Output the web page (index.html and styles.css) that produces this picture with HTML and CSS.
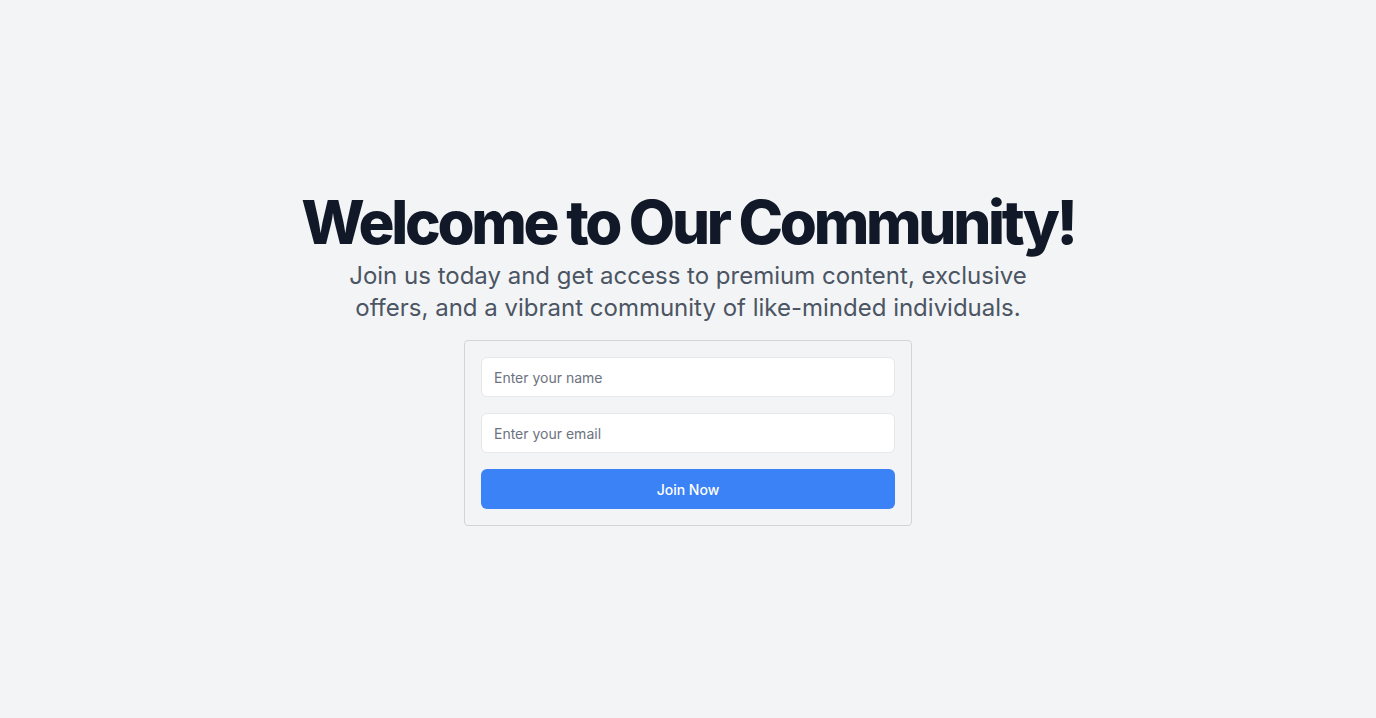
FILE: index.html
```html
<!DOCTYPE html>
<html lang="en">
<head>
<meta charset="utf-8">
<title>Welcome</title>
<link rel="stylesheet" href="styles.css">
</head>
<body>
<main class="page">
  <section class="hero">
    <h1 class="title">Welcome to Our Community!</h1>
    <p class="subtitle">Join us today and get access to premium content, exclusive offers, and a vibrant community of like-minded individuals.</p>
    <form class="card">
      <input class="field" type="text" placeholder="Enter your name">
      <input class="field" type="email" placeholder="Enter your email">
      <button class="btn" type="button">Join Now</button>
    </form>
  </section>
</main>
</body>
</html>
```
FILE: styles.css
```css
* { box-sizing: border-box; }
html, body { margin: 0; padding: 0; }
body {
  background: #f3f4f6;
  font-family: Inter, "Noto Sans", sans-serif;
  color: #111827;
}
.page {
  min-height: 100vh;
  display: flex;
  align-items: center;
  justify-content: center;
}
.hero {
  display: flex;
  flex-direction: column;
  align-items: center;
  text-align: center;
}
.title {
  margin: 0;
  font-size: 60px;
  line-height: 60px;
  font-weight: 800;
  letter-spacing: -0.055em;
  color: #111827;
}
.subtitle {
  margin: 8px 0 0;
  max-width: 690px;
  font-size: 24px;
  line-height: 32px;
  color: #4b5563;
}
.card {
  margin-top: 16px;
  width: 448px;
  padding: 16px;
  border: 1px solid #d1d5db;
  border-radius: 4px;
  display: flex;
  flex-direction: column;
  gap: 16px;
}
.field {
  height: 40px;
  padding: 0 12px;
  border: 1px solid #e5e7eb;
  border-radius: 6px;
  background: #fff;
  font-family: inherit;
  font-size: 14px;
  color: #111827;
  outline: none;
}
.field::placeholder { color: #6b7280; }
.btn {
  height: 40px;
  border: 0;
  border-radius: 6px;
  background: #3b82f6;
  color: #fff;
  font-family: inherit;
  font-size: 14px;
  font-weight: 500;
  cursor: pointer;
}
```
